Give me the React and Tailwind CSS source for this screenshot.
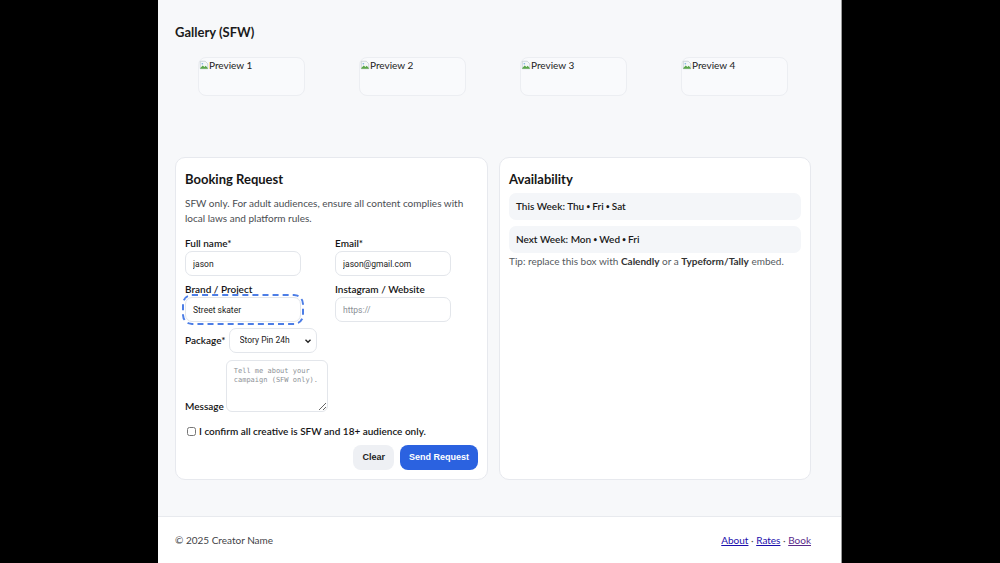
import React, { useState } from 'react';

const previews = ['Preview 1', 'Preview 2', 'Preview 3', 'Preview 4'];

// little broken-image glyph, like the browser draws for a missing src
const BrokenImage = () => (
  <svg width="10" height="10" viewBox="0 0 12 12" className="shrink-0 mt-[1px]">
    <path d="M1.5 1.5h6l3 3v6h-9z" fill="#f4f6f8" stroke="#b9c2cc" strokeWidth="0.8" />
    <path d="M1.5 9.5l3-3 2 2 1.5-1.5 2.5 2.5v1h-9z" fill="#5aa64a" />
    <circle cx="4" cy="4.5" r="1" fill="#7fb0e0" />
  </svg>
);

const Dot = () => <span className="text-[7px] align-middle mx-[2px]">•</span>;

const Field = ({ label, children }) => (
  <label className="flex flex-col gap-[1px] text-[10px] leading-[14px] font-semibold text-[#151515]">
    <span>{label}</span>
    {children}
  </label>
);

const inputCls =
  'w-[116px] h-[25px] px-[7px] rounded-[7px] border border-[#e3e6eb] bg-white text-[8.5px] text-[#222] placeholder:text-[#8a8f96] outline-none font-["Roboto",sans-serif] font-normal';

const App = () => {
  const [form, setForm] = useState({
    name: 'jason',
    email: 'jason@gmail.com',
    brand: 'Street skater',
    insta: '',
    pkg: 'Story Pin 24h',
    message: '',
    agree: false,
  });

  const set = (key) => (e) =>
    setForm({ ...form, [key]: e.target.type === 'checkbox' ? e.target.checked : e.target.value });

  return (
    <div className="min-h-screen bg-black flex justify-center font-['Lato',sans-serif]">
      <div className="w-[684px] bg-[#f7f8fa] flex flex-col border-r border-[#9a9a9a]">
        <main className="flex-1 pl-[17px] pr-[30px]">
          <h2 className="pt-[23px] text-[13px] leading-[18px] font-bold text-[#1b1b1b]">Gallery (SFW)</h2>

          <div className="flex gap-[54px] pl-[23px] mt-[16px]">
            {previews.map((p) => (
              <div
                key={p}
                className="w-[107px] h-[39px] rounded-[8px] border border-[#eceef2] bg-[#f9fafc] flex items-start pt-[1px]"
              >
                <BrokenImage />
                <span className="text-[10px] leading-[12px] text-[#222]">{p}</span>
              </div>
            ))}
          </div>

          <div className="grid grid-cols-[313px_312px] gap-[11px] mt-[61px]">
            <section className="bg-white rounded-[10px] border border-[#e7e9ee] px-[9px] pt-[12px] pb-[9px]">
              <h3 className="text-[13px] leading-[18px] font-bold text-[#161616]">Booking Request</h3>
              <p className="mt-[8px] text-[10px] leading-[15px] text-[#4a4d52]">
                SFW only. For adult audiences, ensure all content complies with local laws and platform rules.
              </p>

              <div className="grid grid-cols-2 gap-x-[7px] gap-y-[6px] mt-[10px]">
                <Field label="Full name*">
                  <input className={inputCls} value={form.name} onChange={set('name')} />
                </Field>
                <Field label="Email*">
                  <input className={inputCls} value={form.email} onChange={set('email')} />
                </Field>
                <Field label="Brand / Project">
                  <input
                    className={`${inputCls} outline-2! outline-dashed! outline-[#4d7ee6]! outline-offset-[1px]!`}
                    value={form.brand}
                    onChange={set('brand')}
                  />
                </Field>
                <Field label="Instagram / Website">
                  <input className={inputCls} placeholder="https://" value={form.insta} onChange={set('insta')} />
                </Field>
              </div>

              <div className="flex items-center gap-[3px] mt-[6px] text-[10px] font-semibold text-[#151515]">
                <span>Package*</span>
                <div className="relative">
                  <select
                    className="appearance-none w-[88px] h-[25px] pl-[10px] pr-[16px] rounded-[7px] border border-[#e3e6eb] bg-white text-[8.5px] text-[#222] font-['Roboto',sans-serif] font-normal outline-none"
                    value={form.pkg}
                    onChange={set('pkg')}
                  >
                    <option>Story Pin 24h</option>
                    <option>Feed Post</option>
                    <option>Reel Shoutout</option>
                  </select>
                  <svg
                    width="8"
                    height="8"
                    viewBox="0 0 8 8"
                    className="absolute right-[5px] top-[9px] pointer-events-none"
                  >
                    <path d="M1.5 2.8L4 5.2l2.5-2.4" fill="none" stroke="#222" strokeWidth="1.4" />
                  </svg>
                </div>
              </div>

              <div className="flex items-end gap-[2px] mt-[7px] text-[10px] font-semibold text-[#151515]">
                <span className="leading-[12px]">Message</span>
                <textarea
                  className="w-[102px] h-[52px] px-[7px] py-[6px] rounded-[6px] border border-[#e3e6eb] bg-white text-[7px] leading-[9px] font-['DejaVu_Sans_Mono',monospace] font-normal placeholder:text-[#8d9196] outline-none"
                  placeholder="Tell me about your campaign (SFW only)."
                  value={form.message}
                  onChange={set('message')}
                />
              </div>

              <label className="flex items-center gap-[3px] mt-[12px] pl-[2px] text-[10px] font-semibold text-[#151515]">
                <input type="checkbox" className="w-[9px] h-[9px] m-0" checked={form.agree} onChange={set('agree')} />
                I confirm all creative is SFW and 18+ audience only.
              </label>

              <div className="flex justify-end gap-[6px] mt-[6px]">
                <button
                  type="button"
                  className="h-[25px] px-[9px] rounded-[8px] bg-[#eef0f4] text-[9px] font-bold text-[#1c1c1c] font-['Liberation_Sans',sans-serif]"
                  onClick={() => setForm({ ...form, name: '', email: '', brand: '', insta: '', message: '', agree: false })}
                >
                  Clear
                </button>
                <button
                  type="button"
                  className="h-[25px] px-[9px] rounded-[8px] bg-[#2b62e0] text-[9px] font-bold text-white font-['Liberation_Sans',sans-serif]"
                >
                  Send Request
                </button>
              </div>
            </section>

            <section className="bg-white rounded-[10px] border border-[#e7e9ee] px-[9px] pt-[12px] self-stretch">
              <h3 className="text-[13px] leading-[18px] font-bold text-[#161616]">Availability</h3>
              <div className="mt-[5px] h-[27px] flex items-center px-[7px] rounded-[7px] bg-[#f4f6f9] text-[10px] font-semibold text-[#1a1a1a]">
                This Week: Thu<Dot />Fri<Dot />Sat
              </div>
              <div className="mt-[6px] h-[27px] flex items-center px-[7px] rounded-[7px] bg-[#f4f6f9] text-[10px] font-semibold text-[#1a1a1a]">
                Next Week: Mon<Dot />Wed<Dot />Fri
              </div>
              <p className="mt-[1px] text-[10px] leading-[14px] text-[#555a60]">
                Tip: replace this box with <b className="text-[#333]">Calendly</b> or a{' '}
                <b className="text-[#333]">Typeform/Tally</b> embed.
              </p>
            </section>
          </div>
        </main>

        <footer className="h-[47px] bg-white border-t border-[#e8eaee] flex items-center justify-between pl-[17px] pr-[30px] text-[10px]">
          <span className="text-[#3f4348]">© 2025 Creator Name</span>
          <nav className="text-[#555]">
            <a href="#about" className="underline text-[#1a0dab]">About</a>
            {' · '}
            <a href="#rates" className="underline text-[#1a0dab]">Rates</a>
            {' · '}
            <a href="#book" className="underline text-[#5a2a8a]">Book</a>
          </nav>
        </footer>
      </div>
    </div>
  );
};

export default App;
